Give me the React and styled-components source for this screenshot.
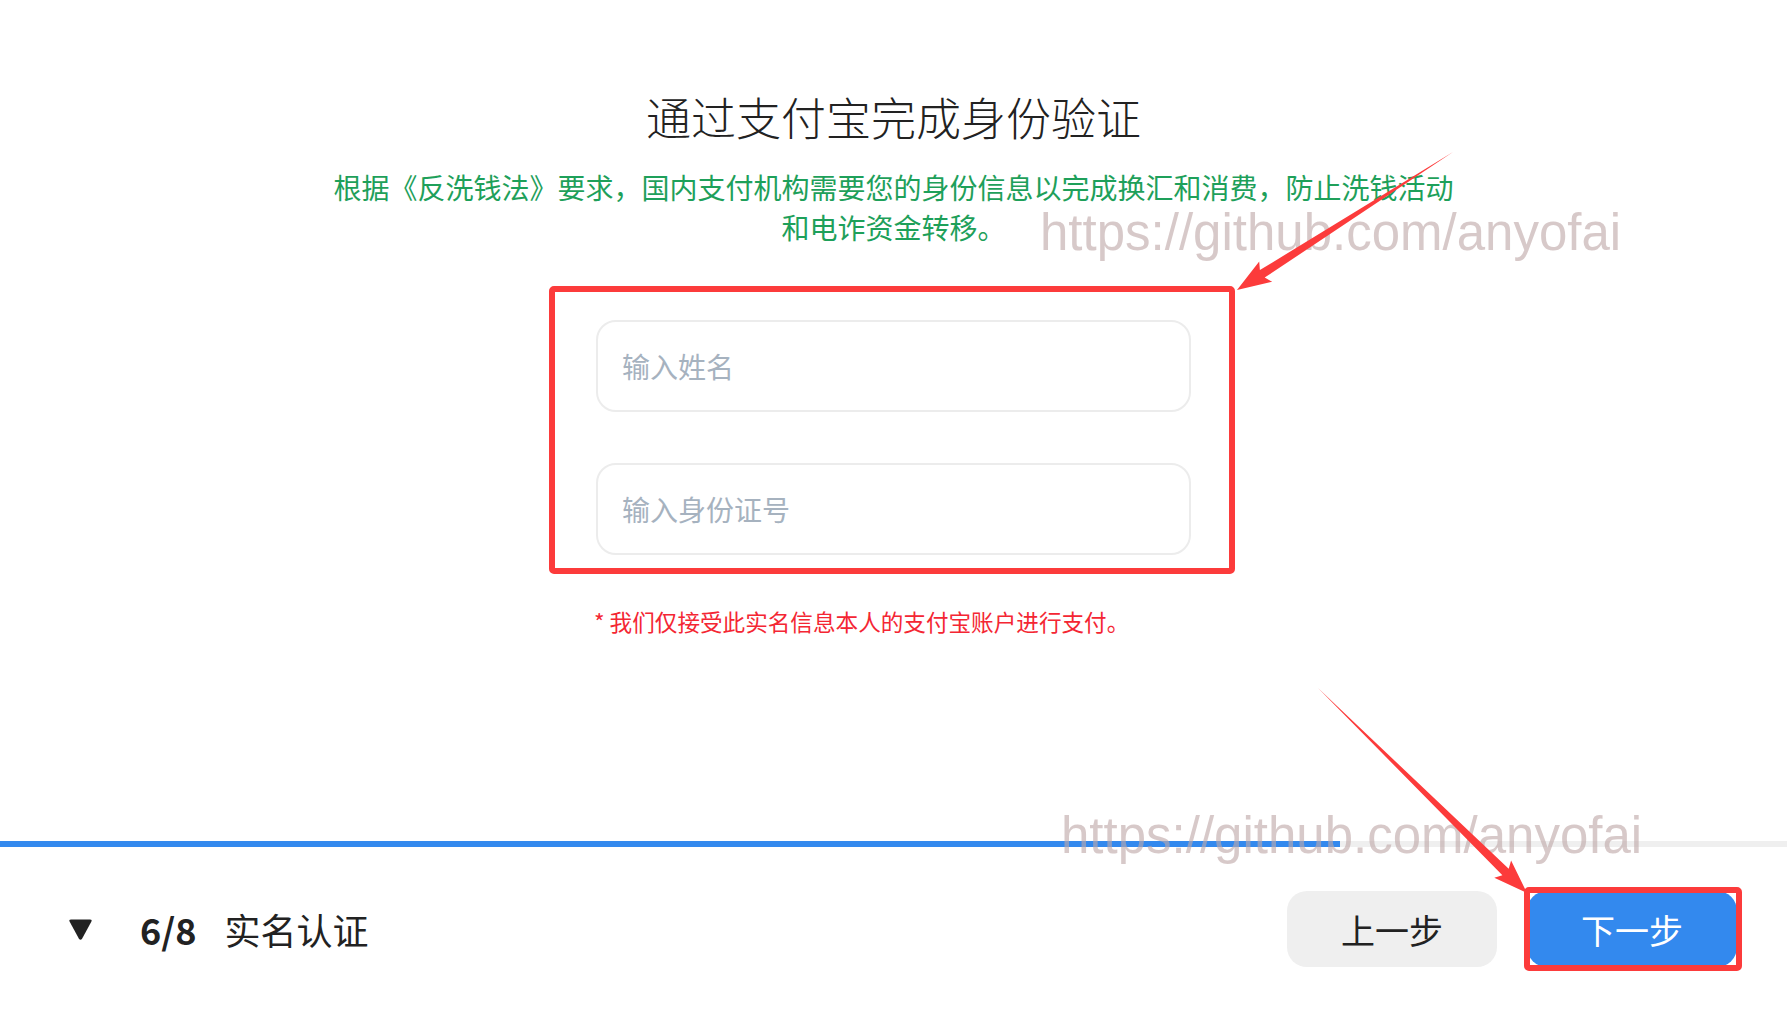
import React from "react";
import styled, { createGlobalStyle } from "styled-components";

const Global = createGlobalStyle`
  html, body { margin: 0; padding: 0; background: #ffffff; }
  body { font-family: "Noto Sans CJK SC", "Noto Sans", sans-serif; color: #222; }
  * { box-sizing: border-box; }
`;

const Page = styled.div`
  position: relative;
  height: 100vh;
  min-height: 1011px;
  display: flex;
  flex-direction: column;
  overflow: hidden;
`;

const Main = styled.main`
  flex: 1;
  display: flex;
  flex-direction: column;
  align-items: center;
  padding-top: 90px;
`;

const Title = styled.h1`
  margin: 0;
  font-size: 45px;
  line-height: 54px;
  font-weight: 300;
  color: #222;
`;

const Desc = styled.p`
  margin: 23px 0 0;
  max-width: 1134px;
  font-size: 28px;
  line-height: 40px;
  color: #1ea05a;
  text-align: center;
`;

const Form = styled.form`
  margin-top: 73px;
  width: 595px;
  display: flex;
  flex-direction: column;
`;

const Fields = styled.div`
  position: relative;
  display: flex;
  flex-direction: column;
  gap: 51px;
`;

const Field = styled.input`
  height: 92px;
  width: 100%;
  border: 2px solid #ececec;
  border-radius: 20px;
  padding: 0 24px;
  font-family: "Noto Sans CJK SC", sans-serif;
  font-size: 28px;
  color: #222;
  outline: none;
  background: #fff;
  &::placeholder { color: #a6b2bf; }
`;

const Note = styled.p`
  margin: 50px 0 0 -2px;
  font-size: 22.6px;
  line-height: 33px;
  color: #f42633;
  white-space: nowrap;
`;

const Highlight = styled.div`
  position: absolute;
  top: ${(p) => p.$t}px;
  left: ${(p) => p.$l}px;
  right: ${(p) => p.$r}px;
  bottom: ${(p) => p.$b}px;
  border: 6px solid #fc3b3b;
  border-radius: 5px;
  pointer-events: none;
`;

const Progress = styled.div`
  height: 6px;
  background: #efefef;
  flex: none;
`;

const ProgressFill = styled.div`
  height: 100%;
  background: #3389ee;
`;

const Footer = styled.footer`
  height: 164px;
  flex: none;
  display: flex;
  align-items: center;
  justify-content: space-between;
  padding: 0 50px 0 68px;
`;

const StepInfo = styled.div`
  display: flex;
  align-items: center;
  font-size: 36px;
  color: #222;
`;

const StepCount = styled.span`
  margin-left: 47px;
  font-weight: 600;
`;

const StepName = styled.span`
  margin-left: 28px;
`;

const Actions = styled.div`
  display: flex;
  gap: 30px;
`;

const ButtonWrap = styled.div`
  position: relative;
`;

const Button = styled.button`
  width: 210px;
  height: 76px;
  border: none;
  border-radius: 20px;
  font-family: "Noto Sans CJK SC", sans-serif;
  font-size: 34px;
  cursor: pointer;
  background: ${(p) => (p.$primary ? "#3389ee" : "#efefef")};
  color: ${(p) => (p.$primary ? "#ffffff" : "#222")};
`;

const Watermark = styled.div`
  position: absolute;
  top: ${(p) => p.$top}px;
  left: ${(p) => p.$left}px;
  font-family: "Liberation Sans", Arial, sans-serif;
  font-size: 51px;
  line-height: 1;
  color: rgba(190, 168, 168, 0.62);
  white-space: nowrap;
  pointer-events: none;
`;

const Overlay = styled.svg`
  position: absolute;
  inset: 0;
  width: 100%;
  height: 100%;
  pointer-events: none;
`;

function arrowPoints(tx, ty, px, py, headLen = 30, headHalf = 12, shaftHalf = 4.5) {
  const dx = px - tx;
  const dy = py - ty;
  const len = Math.hypot(dx, dy);
  const ux = dx / len;
  const uy = dy / len;
  const nx = -uy;
  const ny = ux;
  const bx = px - ux * headLen;
  const by = py - uy * headLen;
  const pts = [
    [tx, ty],
    [bx + nx * shaftHalf, by + ny * shaftHalf],
    [bx - ux * 4 + nx * headHalf, by - uy * 4 + ny * headHalf],
    [px, py],
    [bx - ux * 4 - nx * headHalf, by - uy * 4 - ny * headHalf],
    [bx - nx * shaftHalf, by - ny * shaftHalf],
  ];
  return pts.map((p) => p.map((v) => v.toFixed(1)).join(",")).join(" ");
}

function DownTriangle() {
  return (
    <svg width="25" height="23" viewBox="0 0 25 23">
      <path d="M3 1.5 H22 Q24.5 1.5 23.3 3.8 L14.2 20.5 Q12.5 23 10.8 20.5 L1.7 3.8 Q0.5 1.5 3 1.5 Z" fill="#222" />
    </svg>
  );
}

export default function App() {
  const progress = 6 / 8;
  return (
    <Page>
      <Global />
      <Main>
        <Title>通过支付宝完成身份验证</Title>
        <Desc>根据《反洗钱法》要求，国内支付机构需要您的身份信息以完成换汇和消费，防止洗钱活动和电诈资金转移。</Desc>
        <Form onSubmit={(e) => e.preventDefault()}>
          <Fields>
            <Field placeholder="输入姓名" />
            <Field placeholder="输入身份证号" />
            <Highlight $t={-34} $l={-47} $r={-44} $b={-19} />
          </Fields>
          <Note>* 我们仅接受此实名信息本人的支付宝账户进行支付。</Note>
        </Form>
      </Main>
      <Progress>
        <ProgressFill style={{ width: `${progress * 100}%` }} />
      </Progress>
      <Footer>
        <StepInfo>
          <DownTriangle />
          <StepCount>6/8</StepCount>
          <StepName>实名认证</StepName>
        </StepInfo>
        <Actions>
          <ButtonWrap>
            <Button type="button">上一步</Button>
          </ButtonWrap>
          <ButtonWrap>
            <Button type="button" $primary>下一步</Button>
            <Highlight $t={-4} $l={-3} $r={-5} $b={-4} />
          </ButtonWrap>
        </Actions>
      </Footer>
      <Watermark $top={207} $left={1040}>https://github.com/anyofai</Watermark>
      <Watermark $top={810} $left={1061}>https://github.com/anyofai</Watermark>
      <Overlay viewBox="0 0 1787 1011" preserveAspectRatio="none">
        <polygon points={arrowPoints(1453, 152, 1237, 290)} fill="#fc3b3b" />
        <polygon points={arrowPoints(1318, 688, 1527, 893)} fill="#fc3b3b" />
      </Overlay>
    </Page>
  );
}
